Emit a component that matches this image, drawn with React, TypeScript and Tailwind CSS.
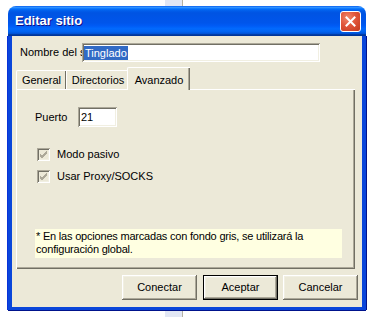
import React from "react";

function Check() {
  return (
    <div className="w-[13px] h-[13px] bg-[#ECE9D8] shadow-[inset_1px_1px_#ACA899,inset_-1px_-1px_#fff,inset_2px_2px_#716F64,inset_-2px_-2px_#F1EFE2] flex items-center justify-center">
      <svg width="9" height="9" viewBox="0 0 9 9">
        <path d="M1 4 L3 6 L8 1 M1 5 L3 7 L8 2 M1 6 L3 8 L8 3" stroke="#ACA899" strokeWidth="1" fill="none" />
      </svg>
    </div>
  );
}

export default function App() {
  return (
    <div className="relative w-[370px] h-[317px] overflow-hidden bg-white font-['Liberation_Sans',Arial,sans-serif] text-[11px] text-black">
      <div className="absolute left-[165px] top-0 h-full w-[18px] bg-[#E2E7F4] border-r border-[#B5B1A2]" />
      <div className="absolute left-[8px] top-[6px] w-[358px] h-[304px] flex flex-col">
        {/* title bar */}
        <div className="h-[30px] shrink-0 rounded-t-[8px] flex items-center pl-[7px] pr-[5px] bg-[linear-gradient(to_bottom,#0058EE_0%,#3593FF_4%,#288EFF_6%,#127DFF_8%,#036FFC_10%,#0262EE_14%,#0057E5_20%,#0054E3_24%,#0055EB_56%,#005BF5_66%,#026AFE_76%,#0062EF_86%,#0052D6_92%,#0040AB_94%,#003092_100%)]">
          <span className="flex-1 text-white font-bold text-[13px] [text-shadow:1px_1px_#0F1089]">Editar sitio</span>
          <div className="w-[21px] h-[21px] rounded-[3px] border border-white bg-[radial-gradient(circle_at_35%_30%,#F08A6E_0%,#E0553A_45%,#C4381C_100%)] flex items-center justify-center">
            <svg width="11" height="11" viewBox="0 0 11 11">
              <path d="M1.5 1.5 L9.5 9.5 M9.5 1.5 L1.5 9.5" stroke="white" strokeWidth="2" strokeLinecap="square" />
            </svg>
          </div>
        </div>
        {/* body */}
        <div className="flex-1 flex flex-col bg-[#ECE9D8] border-l-[4px] border-r-[4px] border-b-[3px] border-[#0A46DA] shadow-[-1px_0_#0831D9,1px_0_#00138C,0_1px_#00138C]">
          <div className="mt-[7px] h-[19px] flex items-center">
            <div className="pl-[8px] w-[70px] overflow-hidden whitespace-nowrap leading-[19px]">Nombre del s</div>
            <div className="w-[238px] h-[19px] bg-white shadow-[inset_1px_1px_#ACA899,inset_-1px_-1px_#fff,inset_2px_2px_#716F64,inset_-2px_-2px_#F1EFE2] flex items-center pl-[2px]">
              <span className="bg-[#316AC5] text-white leading-[14px] px-[1px]">Tinglado</span>
            </div>
          </div>
          {/* tabs */}
          <div className="mt-[5px] ml-[4px] h-[22px] flex items-end relative z-10">
            <div className="w-[50px] h-[19px] flex items-center justify-center border-t border-l border-white rounded-tl-[2px] shadow-[inset_-1px_0_#716F64]">General</div>
            <div className="w-[63px] h-[19px] flex items-center justify-center border-t border-l border-white">Directorios</div>
            <div className="-ml-[2px] w-[63px] h-[23px] -mb-px bg-[#ECE9D8] flex items-start pt-[4px] justify-center border-t border-l border-white rounded-tl-[2px] shadow-[inset_-1px_0_#716F64,inset_-2px_0_#ACA899]">Avanzado</div>
          </div>
          <div className="ml-[4px] w-[339px] h-[180px] flex flex-col pl-[19px] shadow-[inset_1px_1px_#fff,inset_-1px_-1px_#716F64,inset_-2px_-2px_#ACA899]">
            <div className="mt-[18px] h-[20px] flex items-center">
              <span className="w-[43px]">Puerto</span>
              <div className="w-[39px] h-[20px] bg-white shadow-[inset_1px_1px_#ACA899,inset_-1px_-1px_#fff,inset_2px_2px_#716F64,inset_-2px_-2px_#F1EFE2] flex items-center pl-[3px]">21</div>
            </div>
            <div className="mt-[21px] h-[13px] flex items-center pl-[2px] gap-[7px]">
              <Check />
              <span>Modo pasivo</span>
            </div>
            <div className="mt-[9px] h-[13px] flex items-center pl-[2px] gap-[7px]">
              <Check />
              <span>Usar Proxy/SOCKS</span>
            </div>
            <div className="mt-auto mb-[11px] w-[307px] h-[29px] bg-[#FFFFE1] pl-[1px] pt-[1px] leading-[13px] whitespace-nowrap tracking-[-0.2px]">
              * En las opciones marcadas con fondo gris, se utilizará la
              <br />
              configuración global.
            </div>
          </div>
          <div className="mt-[6px] flex justify-end pr-[4px] gap-[5px]">
            <button className="w-[75px] h-[25px] mr-[1px] bg-[#ECE9D8] shadow-[inset_-1px_-1px_#716F64,inset_1px_1px_#fff,inset_-2px_-2px_#ACA899,inset_2px_2px_#F1EFE2]">Conectar</button>
            <button className="w-[75px] h-[25px] bg-[#ECE9D8] border border-black shadow-[inset_-1px_-1px_#716F64,inset_1px_1px_#fff,inset_-2px_-2px_#ACA899,inset_2px_2px_#F1EFE2]">Aceptar</button>
            <button className="w-[75px] h-[25px] bg-[#ECE9D8] shadow-[inset_-1px_-1px_#716F64,inset_1px_1px_#fff,inset_-2px_-2px_#ACA899,inset_2px_2px_#F1EFE2]">Cancelar</button>
          </div>
        </div>
      </div>
    </div>
  );
}
